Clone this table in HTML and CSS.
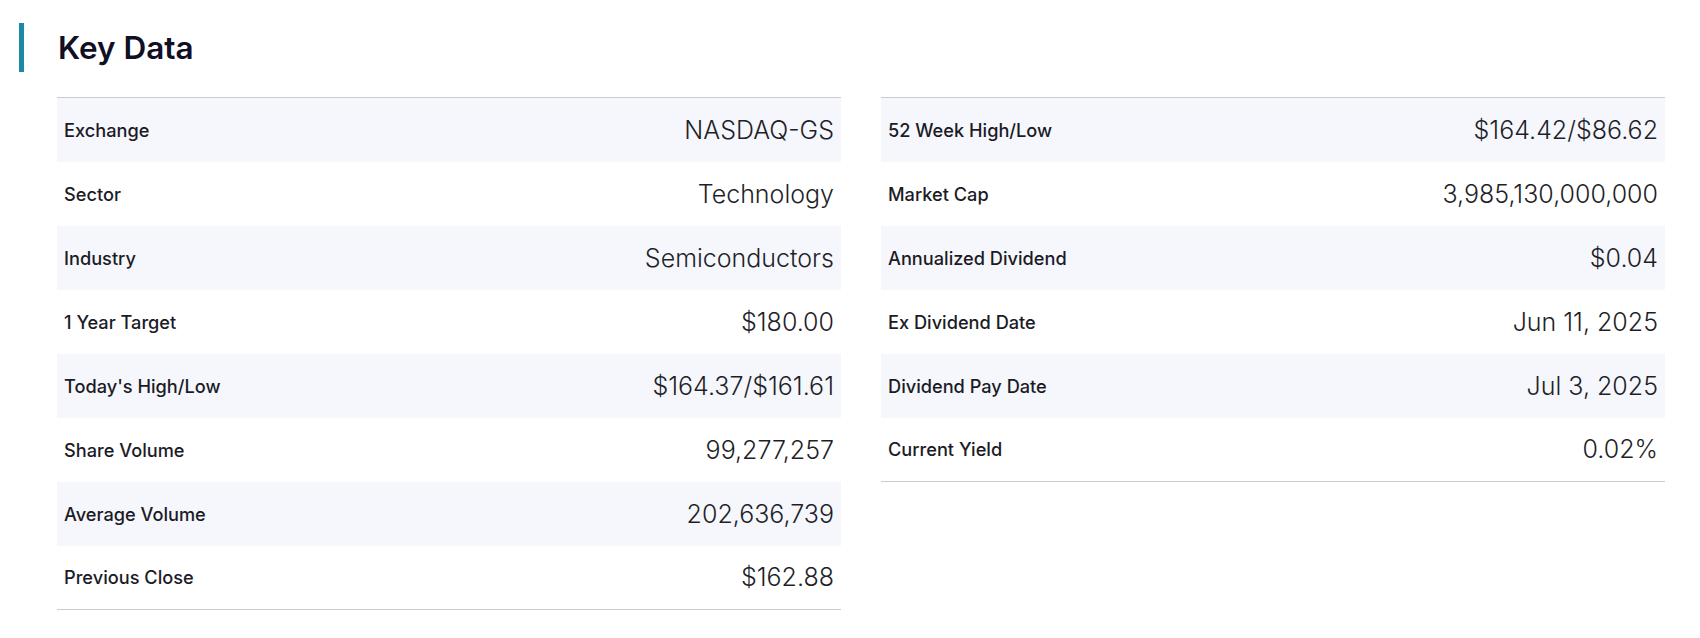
FILE: index.html
```html
<!DOCTYPE html>
<html lang="en">
<head>
<meta charset="utf-8">
<title>Key Data</title>
<link rel="stylesheet" href="styles.css">
</head>
<body>
<section class="key-data">
  <header class="kd-header">
    <span class="kd-accent"></span>
    <h2 class="kd-title">Key Data</h2>
  </header>
  <div class="kd-grid">
    <table class="kd-table">
      <tbody>
        <tr><th>Exchange</th><td>NASDAQ-GS</td></tr>
        <tr><th>Sector</th><td>Technology</td></tr>
        <tr><th>Industry</th><td>Semiconductors</td></tr>
        <tr><th>1 Year Target</th><td>$180.00</td></tr>
        <tr><th>Today's High/Low</th><td>$164.37/$161.61</td></tr>
        <tr><th>Share Volume</th><td>99,277,257</td></tr>
        <tr><th>Average Volume</th><td>202,636,739</td></tr>
        <tr><th>Previous Close</th><td>$162.88</td></tr>
      </tbody>
    </table>
    <table class="kd-table">
      <tbody>
        <tr><th>52 Week High/Low</th><td>$164.42/$86.62</td></tr>
        <tr><th>Market Cap</th><td>3,985,130,000,000</td></tr>
        <tr><th>Annualized Dividend</th><td>$0.04</td></tr>
        <tr><th>Ex Dividend Date</th><td>Jun 11, 2025</td></tr>
        <tr><th>Dividend Pay Date</th><td>Jul 3, 2025</td></tr>
        <tr><th>Current Yield</th><td>0.02%</td></tr>
      </tbody>
    </table>
  </div>
</section>
</body>
</html>
```
FILE: styles.css
```css
html, body {
  margin: 0;
  padding: 0;
  background: #ffffff;
}

body {
  font-family: Inter, "Noto Sans", "Liberation Sans", sans-serif;
  color: #1b1b26;
}

.key-data {
  padding: 23px 35px 0 57px;
}

.kd-header {
  display: flex;
  align-items: center;
  gap: 34px;
  margin-left: -38px;
  height: 49px;
}

.kd-accent {
  width: 5px;
  height: 49px;
  background: #1a88a6;
  flex: none;
}

.kd-title {
  margin: 0;
  font-size: 31.5px;
  font-weight: 600;
  color: #0f0f26;
  letter-spacing: 0;
}

.kd-grid {
  margin-top: 25px;
  display: grid;
  grid-template-columns: 784px 784px;
  column-gap: 40px;
  align-items: start;
}

.kd-table {
  width: 100%;
  border-collapse: collapse;
  border-top: 1px solid #cbcbd0;
  border-bottom: 1px solid #cbcbd0;
}

.kd-table tr {
  height: 64px;
}

.kd-table tr:nth-child(odd) {
  background: #f6f7fc;
}

.kd-table th {
  text-align: left;
  font-size: 18.2px;
  font-weight: 500;
  color: #1b1b26;
  padding: 0 0 0 7px;
  white-space: nowrap;
}

.kd-table td {
  text-align: right;
  font-size: 25px;
  font-weight: 350;
  color: #1f1f29;
  padding: 0 7px 0 0;
  white-space: nowrap;
}
```
